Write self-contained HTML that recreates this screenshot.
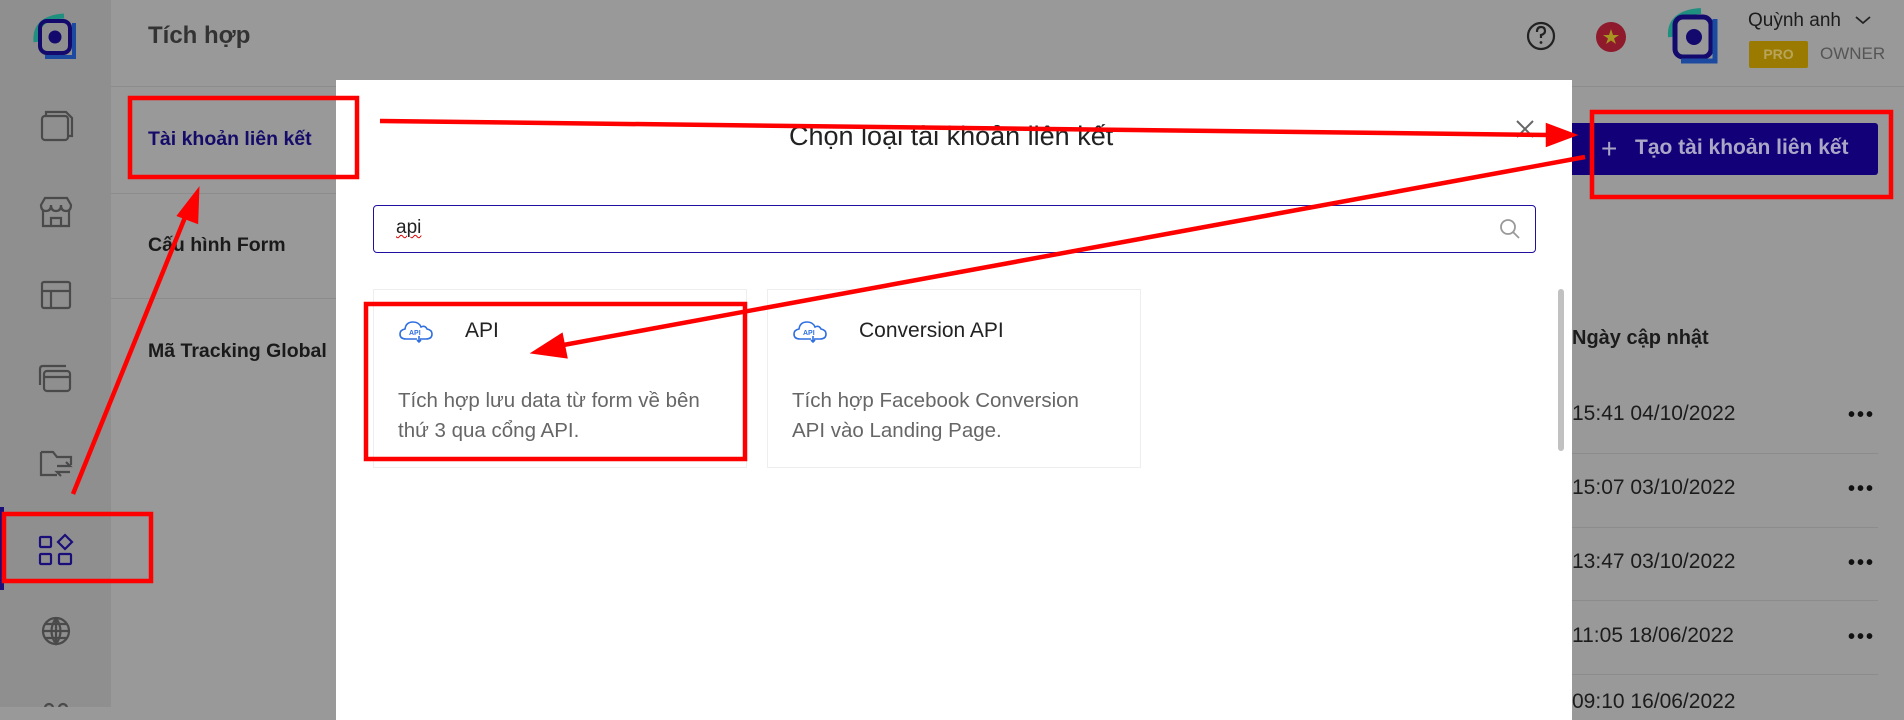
<!DOCTYPE html>
<html><head><meta charset="utf-8"><style>
*{margin:0;padding:0;box-sizing:border-box}
body{width:1904px;height:707px;overflow:hidden;position:relative;background:#999;font-family:"Liberation Sans","Noto Sans CJK SC",sans-serif}
.a{position:absolute;white-space:nowrap}
.side{left:0;top:0;width:111px;height:707px;background:#8f8f8f}
.hdr{left:111px;top:86px;width:1793px;height:1px;background:#8c8c8c}
.div{position:absolute;left:111px;width:225px;height:1px;background:#8c8c8c}
.menu{font-size:19.5px;font-weight:bold;color:#1a1a1a;left:148px}
.modal{left:336px;top:80px;width:1236px;height:640px;background:#fff}
.card{position:absolute;top:289px;height:179px;border:1px solid #eee;background:#fff}
.ct{font-size:21px;color:#222}
.cd{font-size:20.5px;color:#666;line-height:30px}
.time{left:1572px;font-size:21px;color:#1c1c1c}
.dots{left:1848px;font-size:20px;color:#111;letter-spacing:2px;font-weight:bold}
.rl{position:absolute;left:1572px;width:306px;height:1px;background:#8c8c8c}
</style></head><body>
<div class="a side"></div>
<div style="position:absolute;left:0;top:507px;width:4px;height:83px;background:#1a0f7a"></div>
<div class="a hdr"></div>
<div class="a" style="left:148px;top:22px;font-size:24px;font-weight:bold;color:#333">Tích hợp</div>
<div class="div" style="top:193px"></div>
<div class="div" style="top:298px"></div>
<div class="a menu" style="top:128px;color:#150c6a">Tài khoản liên kết</div>
<div class="a menu" style="top:234px">Cấu hình Form</div>
<div class="a menu" style="top:340px">Mã Tracking Global</div>

<svg class="a" style="left:0;top:0" width="111" height="707" fill="none" stroke="#4a4a4a" stroke-width="2.2">
<g transform="translate(30,12)"><path d="M6 30 Q4 6 34 4" stroke="#1f8f80" stroke-width="5"/><rect x="10" y="9" width="30" height="32" rx="7" stroke="#140a6e" stroke-width="4"/><path d="M44 11 V45 H15" stroke="#1c4aa0" stroke-width="4"/><circle cx="25" cy="25" r="6.5" fill="#140a6e" stroke="none"/></g>
<rect x="42" y="116" width="26" height="24" rx="3"/><path d="M46 116 V112 H66 L72 118 V136 H68"/>
<path d="M41 205 L45 198 H67 L71 205 Q71 211 66 211 Q61 211 61 205 Q61 211 56 211 Q51 211 51 205 Q51 211 46 211 Q41 211 41 205Z M43 211 V226 H69 V211 M51 226 V218 H61 V226"/>
<rect x="42" y="282" width="28" height="26" rx="2"/><path d="M42 291 H70 M51 291 V308"/>
<rect x="44" y="371" width="26" height="20" rx="3"/><path d="M40 385 V369 Q40 366 43 366 H66"/><path d="M44 377 H70"/>
<path d="M41 452 V475 H57 M41 452 H53 L57 457 H71 V465"/><path d="M57 466 H70 L66 462 M70 472 H57 L61 476"/>
<g stroke="#1a0f7a"><rect x="40" y="537" width="11" height="10" rx="1"/><rect x="40" y="554" width="11" height="10" rx="1"/><rect x="59" y="554" width="12" height="10" rx="1"/><path d="M65 535 L72 542 L65 549 L58 542Z"/></g>
<circle cx="56" cy="631" r="13"/><path d="M43 631 H69 M56 618 V644 M45 624 H67 M45 638 H67 M56 618 Q47 631 56 644 Q65 631 56 618"/>
<circle cx="49" cy="708" r="4"/><circle cx="63" cy="708" r="4"/>
</svg>

<svg class="a" style="left:1520px;top:5px" width="210" height="65" fill="none">
<circle cx="21" cy="31" r="13" stroke="#222" stroke-width="2.2"/><path d="M17 27 Q17 22 21 22 Q25 22 25 26 Q25 29 21 30 V33" stroke="#222" stroke-width="2.2"/><circle cx="21" cy="37.5" r="1.4" fill="#222"/>
<circle cx="91" cy="32" r="15" fill="#8e1a2c"/><path d="M91 24 L93 30 L99 30 L94 33.5 L96 39 L91 35.5 L86 39 L88 33.5 L83 30 L89 30Z" fill="#a89420"/>
<g transform="translate(145,2)"><path d="M6 30 Q4 6 36 4" stroke="#1f8f80" stroke-width="6"/><rect x="10" y="10" width="36" height="40" rx="8" stroke="#140a6e" stroke-width="5"/><path d="M50 12 V54 H16" stroke="#1c4aa0" stroke-width="5"/><circle cx="29" cy="30" r="8" fill="#140a6e"/></g>
</svg>
<div class="a" style="left:1748px;top:10px;font-size:19px;color:#1c1c1c">Quỳnh anh</div>
<svg class="a" style="left:1854px;top:14px" width="18" height="12" fill="none" stroke="#222" stroke-width="1.8"><path d="M2 3 L9 9 L16 3"/></svg>
<div class="a" style="left:1749px;top:41px;width:59px;height:27px;background:#9a7a00;border-radius:2px;color:#b9a55a;font-size:14px;font-weight:bold;text-align:center;line-height:27px">PRO</div>
<div class="a" style="left:1820px;top:44px;font-size:17px;color:#555">OWNER</div>

<div class="a" style="left:1560px;top:123px;width:318px;height:52px;background:#120078;border-radius:3px"></div>
<div class="a" style="left:1601px;top:133px;font-size:28px;color:#a9a6c6;font-weight:300">+</div>
<div class="a" style="left:1635px;top:136px;font-size:21px;font-weight:bold;color:#a9a6c6">Tạo tài khoản liên kết</div>
<div class="a" style="left:1572px;top:327px;font-size:20px;font-weight:bold;color:#1c1c1c">Ngày cập nhật</div>
<div class="a time" style="top:402px">15:41 04/10/2022</div>
<div class="a time" style="top:476px">15:07 03/10/2022</div>
<div class="a time" style="top:550px">13:47 03/10/2022</div>
<div class="a time" style="top:624px">11:05 18/06/2022</div>
<div class="a time" style="top:690px">09:10 16/06/2022</div>
<div class="a dots" style="top:404px">•••</div>
<div class="a dots" style="top:478px">•••</div>
<div class="a dots" style="top:552px">•••</div>
<div class="a dots" style="top:626px">•••</div>
<div class="rl" style="top:453px"></div><div class="rl" style="top:527px"></div><div class="rl" style="top:600px"></div><div class="rl" style="top:674px"></div>

<div class="a modal"></div>
<div class="a" style="left:789px;top:121px;font-size:27px;color:#222">Chọn loại tài khoản liên kết</div>
<svg class="a" style="left:1514px;top:118px" width="22" height="22" stroke="#666" stroke-width="2"><path d="M3 3 L19 19 M19 3 L3 19"/></svg>
<div class="a" style="left:373px;top:205px;width:1163px;height:48px;border:1px solid #2010a0;border-radius:4px"></div>
<div class="a" style="left:396px;top:217px;font-size:19px;color:#222;text-decoration:underline wavy #d00;text-decoration-thickness:1px">api</div>
<svg class="a" style="left:1499px;top:218px" width="22" height="22" fill="none" stroke="#999" stroke-width="1.8"><circle cx="9" cy="9" r="7"/><path d="M14 14 L20 20"/></svg>
<div class="a" style="left:1558px;top:289px;width:6px;height:162px;background:#c1c1c1;border-radius:3px"></div>

<div class="card" style="left:373px;width:374px"></div>
<div class="card" style="left:767px;width:374px"></div>
<svg class="a" style="left:398px;top:320px" width="36" height="24" fill="none" stroke="#2f6fe0" stroke-width="1.6"><path d="M8 19 Q2 19 2 14 Q2 10 7 9 Q8 2 15 2 Q21 2 23 7 Q27 5 29 9 Q34 10 34 14 Q34 19 28 19 H22 M6 19 H19"/><path d="M21 16 V22 M19 20 L21 22 L23 20"/><text x="11" y="15" font-size="7" font-weight="bold" fill="#2f6fe0" stroke="none" font-family="Liberation Sans">API</text></svg>
<svg class="a" style="left:792px;top:320px" width="36" height="24" fill="none" stroke="#2f6fe0" stroke-width="1.6"><path d="M8 19 Q2 19 2 14 Q2 10 7 9 Q8 2 15 2 Q21 2 23 7 Q27 5 29 9 Q34 10 34 14 Q34 19 28 19 H22 M6 19 H19"/><path d="M21 16 V22 M19 20 L21 22 L23 20"/><text x="11" y="15" font-size="7" font-weight="bold" fill="#2f6fe0" stroke="none" font-family="Liberation Sans">API</text></svg>
<div class="a ct" style="left:465px;top:319px">API</div>
<div class="a ct" style="left:859px;top:319px">Conversion API</div>
<div class="a cd" style="left:398px;top:386px">Tích hợp lưu data từ form về bên<br>thứ 3 qua cổng API.</div>
<div class="a cd" style="left:792px;top:386px">Tích hợp Facebook Conversion<br>API vào Landing Page.</div>

<svg class="a" style="left:0;top:0" width="1904" height="707" fill="none" stroke="#f00" stroke-width="4.5">
<rect x="130" y="98" width="227" height="79"/>
<rect x="4" y="514" width="147" height="67"/>
<rect x="1592" y="112" width="299" height="85"/>
<rect x="366" y="304" width="379" height="155"/>
<path d="M73 494 L188 210"/><path d="M197 193 L180 215 L196 221Z" fill="#f00"/>
<path d="M380 121 L1550 135"/><path d="M1572 135 L1548 126 L1548 144Z" fill="#f00"/>
<path d="M1585 157 L558 346"/><path d="M536 352 L561 336 L565 356Z" fill="#f00"/>
</svg>
</body></html>
